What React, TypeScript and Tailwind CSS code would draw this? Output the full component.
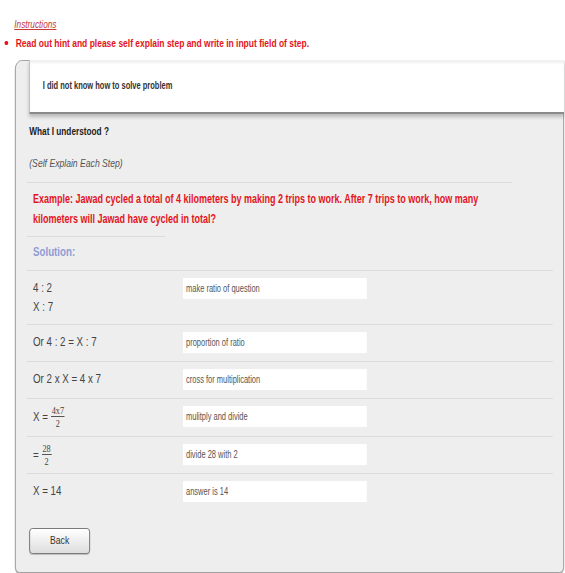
import React from "react";

const font = "font-['Liberation_Sans',Arial,sans-serif]";

function Frac({ n, d }: { n: string; d: string }) {
  return (
    <span className="inline-flex flex-col items-center font-['Liberation_Serif',serif] text-[11px] leading-[10px] text-[#444] ml-[4px]">
      <span className="border-b border-[#555] px-[1px] pb-[1px]">{n}</span>
      <span className="pt-[1px]">{d}</span>
    </span>
  );
}

function Row({ h, left, value }: { h: string; left: React.ReactNode; value: string }) {
  return (
    <div className={`flex items-start border-t border-[#dcdcdc] pt-[7px] pl-[8px] -ml-[3px] w-[701px] ${h}`}>
      <div className="w-[200px] text-[13px] leading-[19px] text-[#444]">{left}</div>
      <input
        readOnly
        spellCheck={false}
        value={value}
        className="w-[245px] h-[21px] bg-white pl-[4px] text-[10px] text-[#555] outline-none border-0"
      />
    </div>
  );
}

export default function App() {
  return (
    <div className={`w-[565px] h-[573px] overflow-hidden bg-white ${font}`}>
      <div className="w-[753px] origin-top-left [transform:scaleX(0.75)]">
        <div className="pt-[11px] pl-[19px] h-[25px]">
          <span className="text-[11px] leading-[14px] italic underline text-[#c43a36]">Instructions</span>
        </div>
        <div className="mt-[11px] flex items-center pl-[6px] h-[14px]">
          <span className="w-[5px] h-[4px] rounded-full bg-[#e3141c] mr-[10px]" />
          <span className="text-[11.3px] leading-[14px] font-bold text-[#e3141c]">
            Read out hint and please self explain step and write in input field of step.
          </span>
        </div>
        <div className="mt-[10px] ml-[20px] w-[732px] h-[513px] bg-[#eeeeee] border border-[#9a9a9a] rounded-tl-[9px] rounded-b-[6px] shadow-[0_1px_1px_rgba(0,0,0,0.35)] pl-[18px]">
          <div className="-mt-px -mr-px h-[54px] flex items-center bg-white border-l border-[#b5b5b5] border-b-2 border-b-[#8a8a8a] pl-[17px] shadow-[0_3px_4px_rgba(0,0,0,0.22),inset_0_3px_3px_rgba(0,0,0,0.06)]">
            <span className="text-[10px] leading-[14px] font-bold text-[#333]">I did not know how to solve problem</span>
          </div>
          <div className="mt-[10px] text-[11px] leading-[14px] font-bold text-[#222]">What I understood ?</div>
          <div className="mt-[18px] text-[11.5px] leading-[14px] italic text-[#555]">(Self Explain Each Step)</div>
          <div className="mt-[12px] -ml-[3px] w-[647px] h-px bg-[#dcdcdc]" />
          <div className="mt-[6px] pl-[5px] w-[625px] text-[12px] leading-[20px] font-bold text-[#e3141c]">
            Example: Jawad cycled a total of 4 kilometers by making 2 trips to work. After 7 trips to work, how many kilometers will Jawad have cycled in total?
          </div>
          <div className="mt-[7px] -ml-[3px] w-[184px] h-px bg-[#dcdcdc]" />
          <div className="mt-[7px] pl-[5px] text-[13px] leading-[16px] font-bold text-[#8f9bd6]">Solution:</div>
          <div className="mt-[10px]">
            <Row h="h-[54px]" left={<><div>4 : 2</div><div>X : 7</div></>} value="make ratio of question" />
            <Row h="h-[37px]" left="Or 4 : 2 = X : 7" value="proportion of ratio" />
            <Row h="h-[37px]" left="Or 2 x X = 4 x 7" value="cross for multiplication" />
            <Row h="h-[38px]" left={<span className="inline-flex items-center -mt-[1px]">X =<Frac n="4x7" d="2" /></span>} value="mulitply and divide" />
            <Row h="h-[37px]" left={<span className="inline-flex items-center -mt-[1px]">=<Frac n="28" d="2" /></span>} value="divide 28 with 2" />
            <Row h="h-[37px]" left="X = 14" value="answer is 14" />
          </div>
          <button className="mt-[18px] w-[81px] h-[26px] rounded-[4px] border border-[#6a6a6a] bg-linear-to-b from-white to-[#dedede] text-[11.5px] text-[#333] shadow-[0_1px_1px_rgba(0,0,0,0.2)]">
            Back
          </button>
        </div>
      </div>
    </div>
  );
}
